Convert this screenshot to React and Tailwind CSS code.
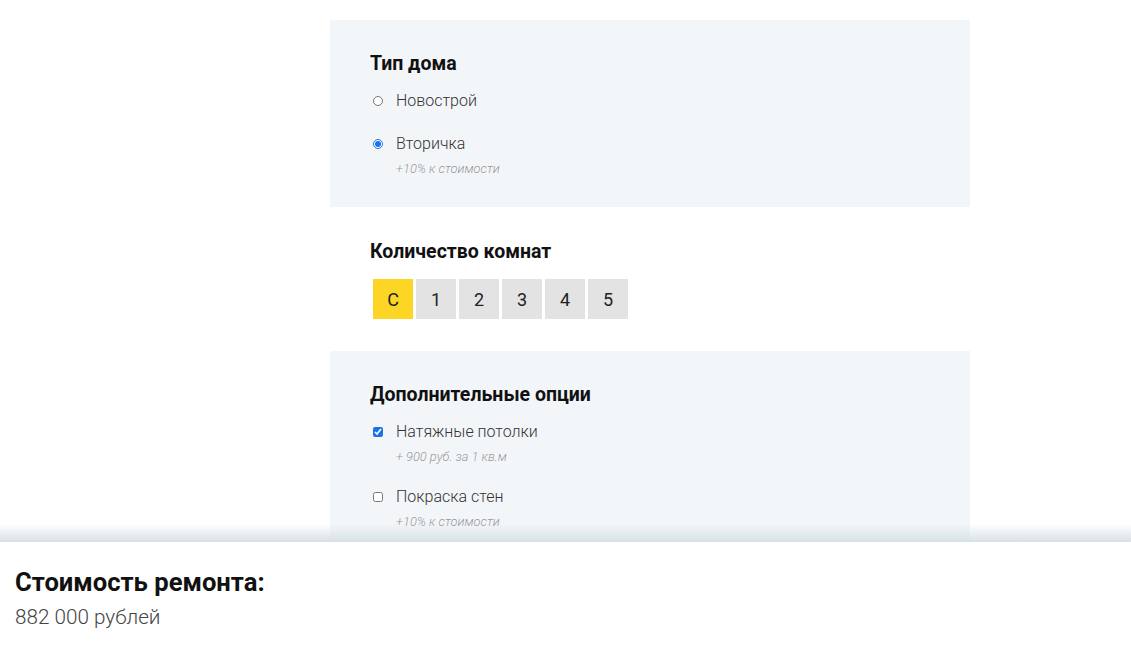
import React from "react";

const font = { fontFamily: "Roboto, 'Open Sans', sans-serif" };

function Option({ type, checked, label, sub }) {
  return (
    <div>
      <label className="flex items-center h-6">
        <span className="w-[26px] flex items-center">
          <input
            type={type}
            name={type === "radio" ? "house" : undefined}
            defaultChecked={checked}
            className="w-[10px] h-[10px] m-0 ml-[3px] accent-[#1a73e8]"
          />
        </span>
        <span className="text-[16px] font-light text-[#333]">{label}</span>
      </label>
      {sub && <div className="mt-[5px] pl-[26px] text-[12.8px] leading-4 italic font-light text-[#999]">{sub}</div>}
    </div>
  );
}

export default function App() {
  const rooms = ["С", "1", "2", "3", "4", "5"];
  return (
    <div style={font} className="min-h-screen bg-white">
      <div className="pt-5 pb-[160px] pl-[330px]">
        <div className="w-[640px]">
          <section className="bg-[#f3f6f9] pl-10 pt-8 pb-[30px]">
            <h2 className="text-[19.5px] leading-6 font-bold text-[#111]">Тип дома</h2>
            <div className="mt-[13px] flex flex-col gap-[19px]">
              <Option type="radio" label="Новострой" />
              <Option type="radio" checked label="Вторичка" sub="+10% к стоимости" />
            </div>
          </section>
          <section className="bg-white pl-10 pt-[33px] pb-8">
            <h2 className="text-[19.5px] leading-6 font-bold text-[#111]">Количество комнат</h2>
            <div className="mt-[15px] flex gap-[3px] pl-[3px]">
              {rooms.map((r, i) => (
                <div
                  key={r}
                  className={
                    i === 0
                      ? "w-10 h-10 flex items-center justify-center bg-[#fdd625] text-[18px] text-[#222]"
                      : "w-10 h-10 flex items-center justify-center bg-[#e3e3e3] text-[18px] text-[#222]"
                  }
                >
                  {r}
                </div>
              ))}
            </div>
          </section>
          <section className="bg-[#f3f6f9] pl-10 pt-8 pb-10">
            <h2 className="text-[19.5px] leading-6 font-bold text-[#111]">Дополнительные опции</h2>
            <div className="mt-[13px] flex flex-col gap-5">
              <Option type="checkbox" checked label="Натяжные потолки" sub="+ 900 руб. за 1 кв.м" />
              <Option type="checkbox" label="Покраска стен" sub="+10% к стоимости" />
              <Option type="checkbox" label="Замена электрики" sub="+ 500 руб. за 1 кв.м" />
            </div>
          </section>
        </div>
      </div>
      <footer className="fixed left-0 right-0 bottom-0 h-[103px] bg-white px-[15px] pt-6">
        <div className="absolute left-0 right-0 -top-[18px] h-[18px] bg-gradient-to-b from-[rgba(214,224,229,0)] to-[rgba(214,224,229,0.95)]" />
        <div className="text-[25.6px] leading-8 font-bold text-[#111]">Стоимость ремонта:</div>
        <div className="mt-[6px] text-[20.7px] leading-[26px] font-light text-[#444]">882 000 рублей</div>
      </footer>
    </div>
  );
}
